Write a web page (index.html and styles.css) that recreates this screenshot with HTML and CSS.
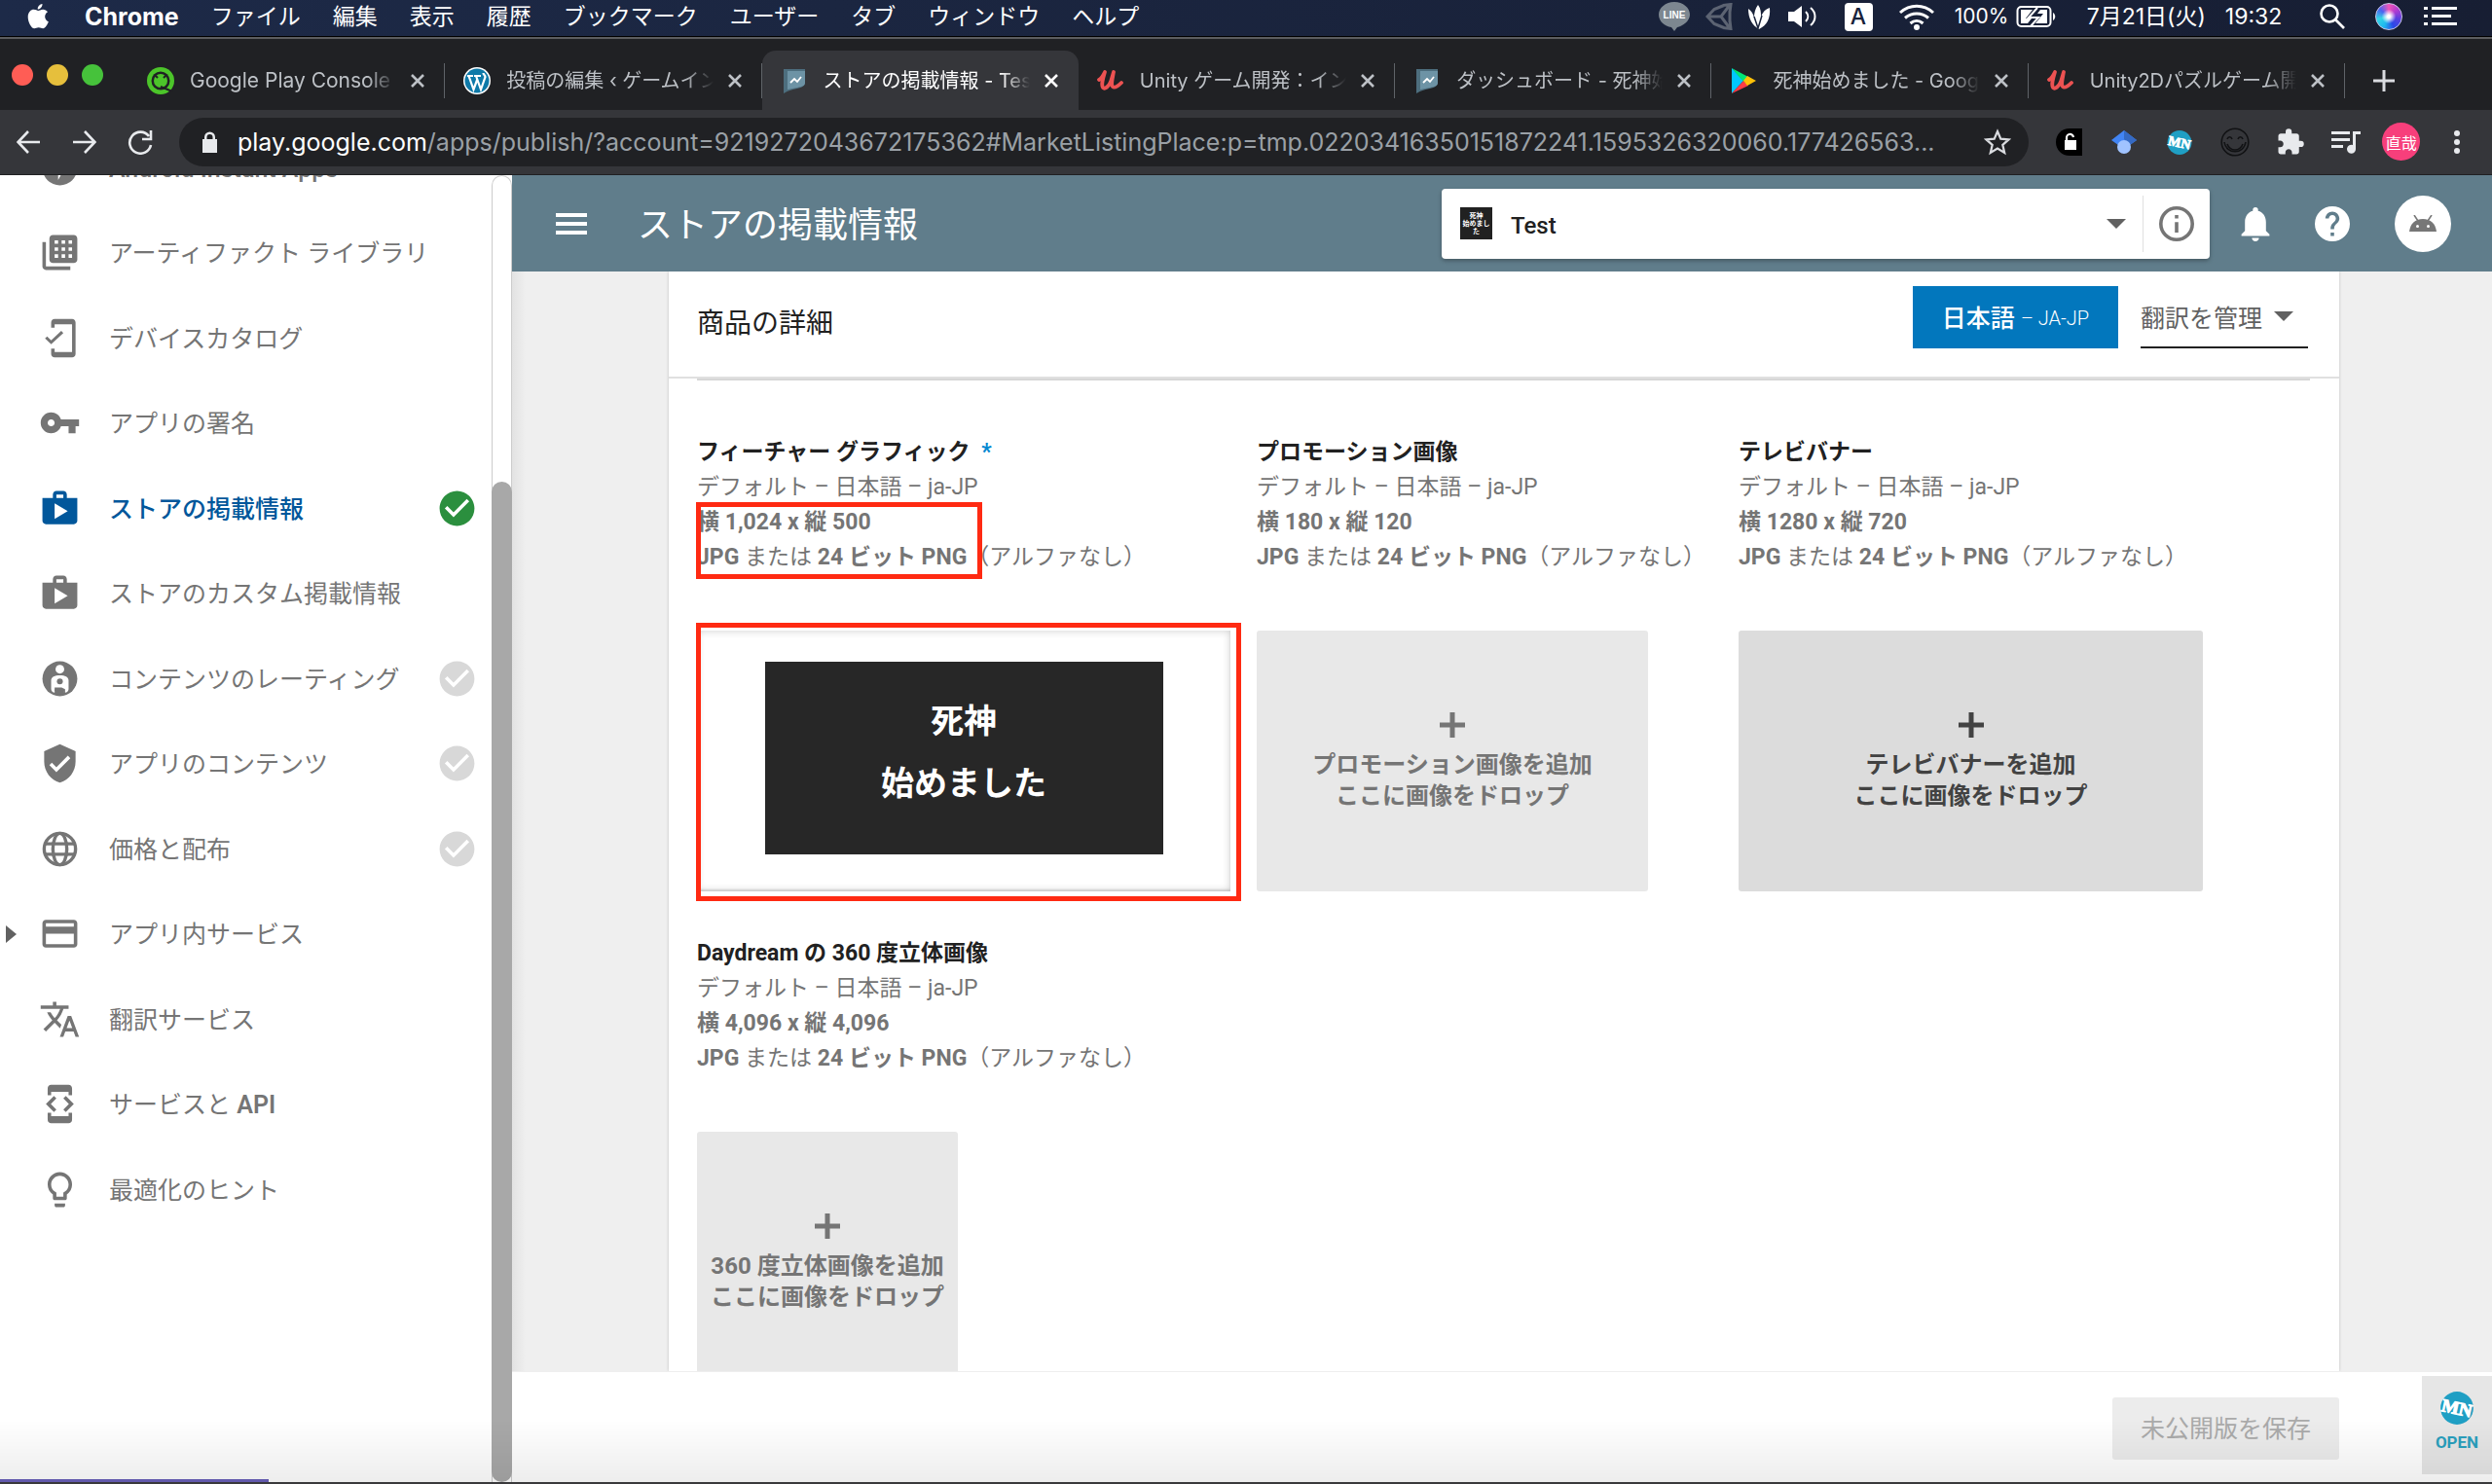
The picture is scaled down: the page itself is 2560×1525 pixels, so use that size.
FILE: index.html
```html
<!DOCTYPE html>
<html lang="ja">
<head>
<meta charset="utf-8">
<title>ストアの掲載情報 - Test</title>
<link rel="stylesheet" href="styles.css">
</head>
<body>
<svg class="defs" aria-hidden="true">
  <symbol id="case" viewBox="0 0 24 24"><path d="M16 6V4c0-1.100-.9-2-2-2h-4c-1.100 0-2 .9-2 2v2H2v13c0 1.100.9 2 2 2h16c1.100 0 2-.9 2-2V6h-6zM10 4h4v2h-4V4zM9 18V9l7.500 4.500L9 18z"/></symbol>
  <symbol id="check" viewBox="0 0 24 24"><path d="M12 2C6.480 2 2 6.480 2 12s4.480 10 10 10 10-4.480 10-10S17.520 2 12 2zm-2 15l-5-5 1.410-1.410L10 14.170l7.590-7.590L19 8l-9 9z"/></symbol>
  <symbol id="close" viewBox="0 0 16 16"><path d="M2 2l12 12M14 2L2 14" fill="none" stroke="currentColor" stroke-width="2.600"/></symbol>
  <symbol id="plus" viewBox="0 0 26 26"><path d="M10.500 0h5v10.500H26v5H15.500V26h-5V15.500H0v-5h10.500z"/></symbol>
  <symbol id="play-flag" viewBox="0 0 28 28"><path d="M3 2h22v14c0 3-3 5-8 6-5 1-9 2-14 5z" fill="#4d6e7e"/><path d="M7 4h18v12c0 3-3 4-8 5l-10 2z" fill="#6d93a5"/><path d="M10 16l4-4 3 3 4-5" fill="none" stroke="#fff" stroke-width="1.800"/></symbol>
  <symbol id="udemy" viewBox="0 0 28 28"><path d="M2 13c2-1 4-4 6-8-2 7-4 13-2 16 2 2 6-1 8-6l3-10c-1 6-3 13-1 15 2 2 6-1 9-4" fill="none" stroke="#ec5252" stroke-width="3.800" stroke-linecap="round" stroke-linejoin="round"/></symbol>
  <symbol id="mn" viewBox="0 0 36 32"><circle cx="18" cy="16" r="16" fill="#1f9fc4"/><text x="18" y="22" text-anchor="middle" transform="rotate(12 18 16)" class="mn-text">MN</text></symbol>
</svg>

<header class="menubar">
  <svg class="apple" viewBox="0 0 24 28" fill="#fff"><path d="M16.500 1c.2 2.800-2.200 5.600-4.700 5.500C11.400 3.900 13.900 1.200 16.500 1zM12.300 8c1.200 0 2.700-1.400 5-1.300 1.700.1 3.600.8 4.700 2.600-4.200 2.600-3.400 8.300.8 10-1 2.900-3.300 7-5.600 7-1.600 0-2.500-1-4.500-1s-2.900 1-4.400 1C5.300 26.400 1.500 19.500 1.700 14c.2-4.600 3.100-7.200 6-7.200 1.900 0 3.400 1.200 4.600 1.200z"/></svg>
  <nav class="menus">
    <b>Chrome</b><span>ファイル</span><span>編集</span><span>表示</span><span>履歴</span><span>ブックマーク</span><span>ユーザー</span><span>タブ</span><span>ウィンドウ</span><span>ヘルプ</span>
  </nav>
  <div class="status">
    <span class="s-line"><svg width="32" height="30" viewBox="0 0 32 30"><path d="M16 0c9 0 16 6 16 13S24 25 19 26l-3 4-3-4C6 25 0 20 0 13S7 0 16 0z" fill="#7d8790"/><text x="16" y="17" text-anchor="middle" class="line-text">LINE</text></svg></span>
    <span class="s-unity"><svg width="28" height="28" viewBox="0 0 28 28" fill="none" stroke="#5c6372" stroke-width="3"><path d="M18 2.500l8-1-1 8M25 18l1 8.500-8-1M19 2.500L9 6.500 2 14l7 7.500 10 4M2 14h14M16 14l9-12M16 14l9 12M25 8v12"/></svg></span>
    <span class="s-leaf"><svg width="24" height="26" viewBox="0 0 24 26" fill="#fff"><path d="M12 26C5 22 1 15 1 5c3 2 5 5 6 9 0-5 1-9 4-13 3 4 3 8 3 12 2-5 5-8 9-9 1 11-3 18-11 22z"/><path d="M7 13l4 12 4-13" fill="none" stroke="#18223b" stroke-width="1.500"/></svg></span>
    <span class="s-volume"><svg width="32" height="26" viewBox="0 0 32 26" fill="#fff"><path d="M1 8h6l8-6v22l-8-6H1z"/><path d="M19 8c3 3 3 7 0 10M24 4c6 5 6 13 0 18" fill="none" stroke="#fff" stroke-width="2"/></svg></span>
    <span class="s-input"><b>A</b></span>
    <span class="s-wifi"><svg width="38" height="28" viewBox="0 0 38 28" fill="none" stroke="#fff" stroke-width="3"><path d="M2 10c10-9 24-9 34 0M7 15.500c7-6 17-6 24 0M12.500 21c4-3.500 9-3.500 13 0"/><circle cx="19" cy="25" r="1.500" fill="#fff"/></svg></span>
    <span class="s-power">100%<svg width="41" height="24" viewBox="0 0 41 24"><rect x="1.500" y="2" width="34" height="20" rx="4" fill="none" stroke="#fff" stroke-width="2"/><path d="M5 5h12l-7 9h6l-4 5H5zM32 19H20l8-10h-6l3-4h7z" fill="#fff"/><path d="M22 3L13 13h10l-8 9" fill="none" stroke="#fff" stroke-width="2"/><path d="M38 8c3 2 3 6 0 8z" fill="#fff"/></svg></span>
    <span class="s-clock">7月21日(火)<span>19:32</span></span>
    <span class="s-search"><svg width="28" height="28" viewBox="0 0 28 28" fill="none" stroke="#fff" stroke-width="2.600"><circle cx="11" cy="11" r="8.500"/><path d="M17 17l9 9"/></svg></span>
    <span class="s-siri"><i></i></span>
    <span class="s-list"><svg width="34" height="20" viewBox="0 0 34 20" fill="#fff"><path d="M0 0h4v3H0zM8 0h26v3H8zM0 8h4v3H0zM8 8h20v3H8zM0 16h4v3H0zM8 16h26v3H8z"/></svg></span>
  </div>
</header>

<div class="tabstrip">
  <div class="lights"><i class="red"></i><i class="yellow"></i><i class="green"></i></div>
  <div class="tabs">
    <div class="tab"><svg class="fav" viewBox="0 0 28 28"><circle cx="14" cy="14" r="14" fill="#4cc52a"/><circle cx="14" cy="14" r="9.500" fill="#202124"/><circle cx="14" cy="14" r="7" fill="#4cc52a"/><path d="M8 8l3 3M20 8l-3 3M14 20l12 5" stroke="#202124" stroke-width="2"/></svg><span class="tab-title latin">Google Play Console</span><button aria-label="閉じる"><svg><use href="#close"/></svg></button></div>
    <div class="tab"><svg class="fav" viewBox="0 0 28 28"><circle cx="14" cy="14" r="14" fill="#fff"/><circle cx="14" cy="14" r="12.500" fill="#0e79a8"/><path d="M4 9h6M11 9h7M5.500 9l5 14 4-11M13 9l5 14 4.500-13c0-2-2-2-2-4" fill="none" stroke="#fff" stroke-width="2.200"/></svg><span class="tab-title">投稿の編集 ‹ ゲームイン</span><button aria-label="閉じる"><svg><use href="#close"/></svg></button></div>
    <div class="tab active"><svg class="fav"><use href="#play-flag"/></svg><span class="tab-title">ストアの掲載情報 - Tes</span><button aria-label="閉じる"><svg><use href="#close"/></svg></button></div>
    <div class="tab"><svg class="fav"><use href="#udemy"/></svg><span class="tab-title">Unity ゲーム開発：イン</span><button aria-label="閉じる"><svg><use href="#close"/></svg></button></div>
    <div class="tab"><svg class="fav"><use href="#play-flag"/></svg><span class="tab-title">ダッシュボード - 死神始</span><button aria-label="閉じる"><svg><use href="#close"/></svg></button></div>
    <div class="tab"><svg class="fav" viewBox="0 0 28 28"><path d="M2 1l12 13L2 27z" fill="#00c8ff"/><path d="M2 1l17 9-5 5z" fill="#00e676"/><path d="M2 27l17-8-5-5z" fill="#ff3d47"/><path d="M18 9l9 5-9 5-4-5z" fill="#ffc107"/></svg><span class="tab-title">死神始めました - Goog</span><button aria-label="閉じる"><svg><use href="#close"/></svg></button></div>
    <div class="tab"><svg class="fav"><use href="#udemy"/></svg><span class="tab-title">Unity2Dパズルゲーム開</span><button aria-label="閉じる"><svg><use href="#close"/></svg></button></div>
  </div>
  <button class="new-tab" aria-label="新しいタブ"><svg width="22" height="22" viewBox="0 0 22 22" stroke="#dadce0" stroke-width="3"><path d="M11 0v22M0 11h22"/></svg></button>
</div>

<div class="toolbar">
  <div class="nav-buttons">
    <button aria-label="戻る"><svg width="24" height="24" viewBox="0 0 24 24"><path d="M12 1L1.500 12 12 23M2 12h22"/></svg></button>
    <button aria-label="進む"><svg width="24" height="24" viewBox="0 0 24 24"><path d="M12 1l10.500 11L12 23M22 12H0"/></svg></button>
    <button aria-label="再読み込み"><svg width="26" height="26" viewBox="0 0 26 26"><path d="M22 7a11 11 0 1 0 2 9M24 1v9h-9"/></svg></button>
  </div>
  <div class="omnibox">
    <svg width="17" height="22" viewBox="0 0 17 22" fill="#e8eaed"><path d="M1 8h2V6a5.500 5.500 0 0 1 11 0v2h2v14H1zM5.500 8h6V6a3 3 0 0 0-6 0z"/></svg>
    <span class="url"><em>play.google.com</em>/apps/publish/?account=9219272043672175362#MarketListingPlace:p=tmp.02203416350151872241.1595326320060.177426563...</span>
    <button aria-label="ブックマーク"><svg width="28" height="28" viewBox="0 0 28 28" fill="none" stroke="#dadce0" stroke-width="2.200"><path d="M14 3l3.300 7.600 8.200.8-6.200 5.400 1.900 8.100L14 20.600l-7.200 4.300 1.900-8.100-6.200-5.400 8.200-.8z"/></svg></button>
  </div>
  <div class="extensions">
    <button aria-label="ロック"><svg width="27" height="28" viewBox="0 0 27 28"><path d="M14 0h13v28H14C6 28 0 22 0 14S6 0 14 0z"/><path d="M9 12h12v10H9z" fill="#fff"/><path d="M11 13V10a3.500 3.500 0 0 1 7-1" fill="none" stroke="#fff" stroke-width="2.200"/></svg></button>
    <button aria-label="Scholar"><svg width="28" height="26" viewBox="0 0 28 26"><path d="M14 1l13 10-7 5H8l-7-5z" fill="#4285f4"/><path d="M14 1l13 10-7 5-6-6z" fill="#356ac3"/><circle cx="14" cy="18" r="7" fill="#a0c3ff"/></svg></button>
    <button aria-label="MN"><svg width="28" height="25"><use href="#mn"/></svg></button>
    <button aria-label="スマイル"><svg width="30" height="30" viewBox="0 0 30 30" fill="none" stroke="#111214" stroke-width="1.600"><circle cx="15" cy="15" r="13.800"/><path d="M7 12c1-3 4-3 5 0M18 12c1-3 4-3 5 0M4 15c2 13 20 13 22 0M7 17c3 8 13 8 16 0"/></svg></button>
    <button aria-label="拡張機能"><svg width="30" height="30" viewBox="0 0 24 24" fill="#e8eaed"><path d="M20.500 11H19V7c0-1.100-.9-2-2-2h-4V3.500a2.500 2.500 0 0 0-5 0V5H4c-1.100 0-2 .9-2 2v3.800h1.500c1.500 0 2.700 1.200 2.700 2.700S5 16.200 3.500 16.200H2V20c0 1.100.9 2 2 2h3.800v-1.500c0-1.500 1.200-2.700 2.700-2.700s2.700 1.200 2.700 2.700V22H17c1.100 0 2-.9 2-2v-4h1.500a2.500 2.500 0 0 0 0-5z"/></svg></button>
    <button aria-label="再生キュー"><svg width="30" height="24" viewBox="0 0 30 24" fill="#e8eaed"><path d="M0 1h19v3H0zM0 8h19v3H0zM0 15h12v3H0zM22 1h8v3h-5v15a4.500 4.500 0 1 1-3-4z"/></svg></button>
    <button class="profile">直哉</button>
    <button aria-label="メニュー"><svg width="6" height="24" viewBox="0 0 6 24" fill="#e8eaed"><circle cx="3" cy="3" r="3"/><circle cx="3" cy="12" r="3"/><circle cx="3" cy="21" r="3"/></svg></button>
  </div>
</div>

<div class="console">
  <aside class="sidebar">
    <ul class="nav">
      <li><a href="#instant"><svg viewBox="0 0 24 24"><path d="M12 2a10 10 0 1 0 0 20 10 10 0 0 0 0-20zm-1 17v-6H8l5-9v6h3z"/></svg><b>Android Instant Apps</b></a></li>
      <li><a href="#artifact"><svg viewBox="0 0 24 24"><path d="M2 6h2v14h14v2H4c-1.100 0-2-.9-2-2zM20 2H8c-1.100 0-2 .9-2 2v12c0 1.100.9 2 2 2h12c1.100 0 2-.9 2-2V4c0-1.100-.9-2-2-2zM11 15H9v-2h2zm0-4H9V9h2zm0-4H9V5h2zm4 8h-2v-2h2zm0-4h-2V9h2zm0-4h-2V5h2zm4 8h-2v-2h2zm0-4h-2V9h2zm0-4h-2V5h2z"/></svg><span>アーティファクト ライブラリ</span></a></li>
      <li><a href="#device"><svg viewBox="0 0 24 24"><path d="M19 1H9c-1.100 0-2 .9-2 2v3h2V4h10v16H9v-2H7v3c0 1.100.9 2 2 2h10c1.100 0 2-.9 2-2V3c0-1.100-.9-2-2-2zM7 15.500l-3.500-3.300 1.200-1.200L7 13.200l5.800-5.400L14 9z"/></svg><span>デバイスカタログ</span></a></li>
      <li><a href="#sign"><svg viewBox="0 0 24 24"><path d="M12.650 10C11.830 7.670 9.610 6 7 6c-3.310 0-6 2.690-6 6s2.690 6 6 6c2.610 0 4.830-1.670 5.650-4H17v4h4v-4h2v-4H12.650zM7 14c-1.100 0-2-.9-2-2s.9-2 2-2 2 .9 2 2-.9 2-2 2z"/></svg><span>アプリの署名</span></a></li>
      <li><a href="#store" class="current"><svg><use href="#case"/></svg><span>ストアの掲載情報</span><svg class="done"><use href="#check"/></svg></a></li>
      <li><a href="#custom"><svg><use href="#case"/></svg><span>ストアのカスタム掲載情報</span></a></li>
      <li><a href="#rating"><svg viewBox="0 0 24 24"><circle cx="12" cy="12" r="10"/><g fill="#fff"><circle cx="12" cy="6.500" r="2.500"/><path d="M12 10c3 0 5 1 5 3v5c0 1-1 2-2 2h-1v-1l-2-1h-3v2c-1 0-2-1-2-2v-5c0-2 2-3 5-3z"/></g><circle cx="12" cy="13.500" r="1.700"/><path d="M9 17h4l2 1v3h-1v-2h-5z"/></svg><span>コンテンツのレーティング</span><svg class="todo"><use href="#check"/></svg></a></li>
      <li><a href="#content"><svg viewBox="0 0 24 24"><path d="M12 1L3 5v6c0 5.550 3.840 10.740 9 12 5.160-1.260 9-6.450 9-12V5l-9-4zm-2 16l-4-4 1.410-1.410L10 14.170l6.590-6.590L18 9l-8 8z"/></svg><span>アプリのコンテンツ</span><svg class="todo"><use href="#check"/></svg></a></li>
      <li><a href="#price"><svg viewBox="0 0 24 24"><g fill="none" stroke="currentColor" stroke-width="1.900"><circle cx="12" cy="12" r="9"/><ellipse cx="12" cy="12" rx="4" ry="9"/><path d="M3.500 9h17M3.500 15h17"/></g></svg><span>価格と配布</span><svg class="todo"><use href="#check"/></svg></a></li>
      <li><a href="#inapp" class="expandable"><svg viewBox="0 0 24 24"><path d="M20 4H4c-1.110 0-2 .9-2 2v12c0 1.110.89 2 2 2h16c1.110 0 2-.89 2-2V6c0-1.110-.89-2-2-2zm0 14H4v-6h16v6zm0-10H4V6h16v2z"/></svg><span>アプリ内サービス</span></a></li>
      <li><a href="#translate"><svg viewBox="0 0 24 24"><path d="M12.870 15.070l-2.540-2.510.03-.03c1.740-1.940 2.980-4.170 3.710-6.530H17V4h-7V2H8v2H1v1.990h11.170C11.500 7.920 10.440 9.750 9 11.350 8.070 10.320 7.300 9.190 6.690 8h-2c.73 1.630 1.730 3.170 2.980 4.560l-5.090 5.020L4 19l5-5 3.110 3.110.76-2.040zM18.500 10h-2L12 22h2l1.120-3h4.750L21 22h2l-4.500-12zm-2.620 7l1.620-4.330L19.120 17h-3.240z"/></svg><span>翻訳サービス</span></a></li>
      <li><a href="#api"><svg viewBox="0 0 24 24"><path d="M7 5h10v2h2V3c0-1.100-.9-1.990-2-1.990L7 1c-1.100 0-2 .9-2 2v4h2V5zm8.410 11.590L20 12l-4.590-4.590L14 8.830 17.170 12 14 15.170l1.410 1.420zM10 15.170L6.830 12 10 8.830 8.590 7.410 4 12l4.590 4.590L10 15.170zM17 19H7v-2H5v4c0 1.100.9 2 2 2h10c1.100 0 2-.9 2-2v-4h-2v2z"/></svg><span>サービスと <b>API</b></span></a></li>
      <li><a href="#tips"><svg viewBox="0 0 24 24"><path d="M9 21c0 .55.45 1 1 1h4c.55 0 1-.45 1-1v-1H9v1zm3-19C8.140 2 5 5.140 5 9c0 2.380 1.190 4.470 3 5.740V17c0 .55.45 1 1 1h6c.55 0 1-.45 1-1v-2.260c1.810-1.270 3-3.360 3-5.740 0-3.860-3.140-7-7-7zm2.850 11.100l-.85.6V16h-4v-2.300l-.85-.6C7.800 12.160 7 10.630 7 9c0-2.760 2.240-5 5-5s5 2.240 5 5c0 1.630-.8 3.160-2.150 4.100z"/></svg><span>最適化のヒント</span></a></li>
    </ul>
    <div class="scrollbar"><div class="thumb"></div></div>
  </aside>

  <main class="main">
    <header class="appbar">
      <button class="burger" aria-label="メニュー"><svg width="32" height="22" viewBox="0 0 32 22" fill="#fff"><path d="M0 0h32v4H0zM0 9h32v4H0zM0 18h32v4H0z"/></svg></button>
      <h1>ストアの掲載情報</h1>
      <div class="picker">
        <span class="thumbnail"><span>死神</span><span>始めまし</span><span>た</span></span>
        <select aria-label="アプリ"><option>Test</option></select>
        <i class="caret"></i>
        <button class="info" aria-label="情報"><svg width="36" height="36" viewBox="2 2 20 20" fill="#757575"><path d="M11 7h2v2h-2zm0 4h2v6h-2zm1-9a10 10 0 1 0 0 20 10 10 0 0 0 0-20zm0 18a8 8 0 1 1 0-16 8 8 0 0 1 0 16z"/></svg></button>
      </div>
      <div class="actions">
        <button aria-label="通知"><svg width="30" height="36" viewBox="4 2 16 20" fill="#fff"><path d="M12 22c1.100 0 2-.9 2-2h-4c0 1.100.9 2 2 2zm6-6v-5c0-3.070-1.640-5.640-4.500-6.320V4a1.500 1.500 0 0 0-3 0v.680C7.630 5.360 6 7.920 6 11v5l-2 2v1h16v-1l-2-2z"/></svg></button>
        <button aria-label="ヘルプ"><svg width="36" height="36" viewBox="2 2 20 20" fill="#fff"><path d="M12 2a10 10 0 1 0 0 20 10 10 0 0 0 0-20zm1 17h-2v-2h2v2zm2.070-7.750l-.9.920C13.450 12.900 13 13.500 13 15h-2v-.5c0-1.100.45-2.100 1.170-2.830l1.240-1.260c.37-.36.590-.86.590-1.410 0-1.100-.9-2-2-2s-2 .9-2 2H8c0-2.210 1.790-4 4-4s4 1.790 4 4c0 .88-.36 1.680-.93 2.250z"/></svg></button>
        <button class="avatar" aria-label="アカウント"><svg width="28" height="17" viewBox="0 0 28 17"><path d="M0 17C1 9 6 4 14 4s13 5 14 13z" fill="#777"/><path d="M5 0l4 6M23 0l-4 6" stroke="#777" stroke-width="1.600"/><circle cx="8.500" cy="11.500" r="1.500" fill="#fff"/><circle cx="19.500" cy="11.500" r="1.500" fill="#fff"/></svg></button>
      </div>
    </header>

    <section class="card">
      <div class="card-head">
        <h2>商品の詳細</h2>
        <button class="lang">日本語 <small>– JA-JP</small></button>
        <button class="manage">翻訳を管理<i class="caret"></i></button>
      </div>
      <div class="assets">
        <article class="asset feature">
          <h3>フィーチャー グラフィック <em>*</em></h3>
          <p>デフォルト – 日本語 – ja-JP</p>
          <div class="spec marked">
            <p><b>横 1,024 x 縦 500</b></p>
            <p><b>JPG</b> または <b>24 ビット PNG</b>（アルファなし）</p>
          </div>
          <div class="preview"><div class="picture"><span>死神</span><span>始めました</span></div></div>
        </article>
        <article class="asset promo">
          <h3>プロモーション画像</h3>
          <p>デフォルト – 日本語 – ja-JP</p>
          <div class="spec">
            <p><b>横 180 x 縦 120</b></p>
            <p><b>JPG</b> または <b>24 ビット PNG</b>（アルファなし）</p>
          </div>
          <button class="drop"><svg><use href="#plus"/></svg><span>プロモーション画像を追加</span><span>ここに画像をドロップ</span></button>
        </article>
        <article class="asset tv">
          <h3>テレビバナー</h3>
          <p>デフォルト – 日本語 – ja-JP</p>
          <div class="spec">
            <p><b>横 1280 x 縦 720</b></p>
            <p><b>JPG</b> または <b>24 ビット PNG</b>（アルファなし）</p>
          </div>
          <button class="drop hover"><svg><use href="#plus"/></svg><span>テレビバナーを追加</span><span>ここに画像をドロップ</span></button>
        </article>
        <article class="asset daydream">
          <h3>Daydream の 360 度立体画像</h3>
          <p>デフォルト – 日本語 – ja-JP</p>
          <div class="spec">
            <p><b>横 4,096 x 縦 4,096</b></p>
            <p><b>JPG</b> または <b>24 ビット PNG</b>（アルファなし）</p>
          </div>
          <button class="drop"><svg><use href="#plus"/></svg><span>360 度立体画像を追加</span><span>ここに画像をドロップ</span></button>
        </article>
      </div>
    </section>

    <footer class="savebar">
      <button class="save" disabled>未公開版を保存</button>
      <button class="open-widget"><svg width="38" height="34"><use href="#mn"/></svg>OPEN</button>
    </footer>
  </main>
</div>
<div class="dock-shade"></div>
</body>
</html>
```
FILE: styles.css
```css
*, *::before, *::after { box-sizing: border-box; }
body {
  margin: 0;
  height: 100vh;
  display: flex;
  flex-direction: column;
  overflow: hidden;
  background: #fff;
  font-family: Roboto, "Noto Sans CJK JP", sans-serif;
  color: #212121;
}
button {
  border: 0;
  padding: 0;
  background: none;
  font: inherit;
  color: inherit;
  display: flex;
  align-items: center;
  justify-content: center;
}
h1, h2, h3, p, ul { margin: 0; padding: 0; font-weight: 400; }
.defs { position: absolute; width: 0; height: 0; }
.mn-text { font: 700 18px "Liberation Serif", serif; fill: #fff; stroke: #fff; stroke-width: 1px; }

/* macOS menu bar */
.menubar {
  flex: none;
  height: 38px;
  display: flex;
  align-items: center;
  padding: 0 26px 3px;
  background: linear-gradient(90deg, #1d2a48, #171e33);
  border-bottom: 1px solid #000;
  color: #fff;
  font: 23px/34px Inter, "Noto Sans CJK JP", sans-serif;
  white-space: nowrap;
}
.apple { width: 26px; height: 28px; }
.menus { display: flex; gap: 33px; margin-left: 35px; }
.menus b { font-size: 25px; }
.status { display: flex; margin-left: auto; }
.status > span { display: flex; align-items: center; justify-content: center; height: 34px; }
.s-line { width: 52px; }
.line-text { font: 700 10px "Liberation Sans", sans-serif; fill: #fff; }
.s-unity { width: 40px; }
.s-leaf { width: 42px; }
.s-volume { width: 48px; }
.s-input { width: 66px; }
.s-input b { width: 29px; line-height: 29px; border-radius: 4px; background: #fff; color: #18223b; text-align: center; font-size: 23px; font-weight: 500; }
.s-wifi { width: 54px; }
.s-power { width: 128px; gap: 8px; font-size: 21px; }
.s-clock { width: 240px; gap: 20px; font-size: 23px; }
.s-search { width: 64px; }
.s-siri { width: 52px; }
.s-siri i {
  width: 28px; height: 28px; border-radius: 50%; border: 1px solid #c9c4e6;
  background: radial-gradient(circle, #fff 8%, transparent 40%), conic-gradient(#f055b8, #b03bd0, #5a3fe0, #2a49e8, #1fb8f0, #33d6e6, #4a63f0, #f055b8);
}
.s-list { width: 54px; }

/* browser tab strip */
.tabstrip {
  flex: none;
  height: 75px;
  display: flex;
  align-items: flex-end;
  background: #202124;
  border-top: 2px solid #5c5d5f;
  color: #bdc1c6;
  font: 20px/30px Inter, "Noto Sans CJK JP", sans-serif;
}
.lights { width: 132px; height: 73px; padding-left: 12px; display: flex; gap: 14px; align-items: center; }
.lights i { width: 22px; height: 22px; border-radius: 50%; }
.lights .red { background: #ff5d55; }
.lights .yellow { background: #e6bf3c; }
.lights .green { background: #46c23b; }
.tabs { flex: 1; display: flex; min-width: 0; }
.tab {
  flex: 1 1 0;
  min-width: 0;
  height: 61px;
  display: flex;
  align-items: center;
  padding: 0 20px 0 19px;
  background: linear-gradient(#5f6368, #5f6368) right / 1px 36px no-repeat;
}
.tab.active { background: #35363a; border-radius: 14px 14px 0 0; color: #fff; }
.fav { width: 28px; height: 28px; flex: none; }
.tab-title {
  flex: 1;
  min-width: 0;
  margin: 0 14px 0 16px;
  overflow: hidden;
  white-space: nowrap;
  mask-image: linear-gradient(90deg, #000 86%, transparent);
}
.latin { font-size: 21px; }
.tab button svg { width: 16px; height: 16px; }
.new-tab { width: 151px; height: 61px; padding-right: 72px; }

/* browser toolbar */
.toolbar {
  flex: none;
  height: 67px;
  display: flex;
  align-items: center;
  background: #35363a;
  border-bottom: 1px solid #1f2022;
}
.nav-buttons { width: 184px; padding-right: 11px; display: flex; }
.nav-buttons button { flex: 1; }
.nav-buttons svg { fill: none; stroke: #e8eaed; stroke-width: 2.6px; }
.omnibox {
  flex: 1;
  min-width: 0;
  height: 50px;
  display: flex;
  align-items: center;
  padding: 0 18px 0 23px;
  border-radius: 25px;
  background: #202124;
}
.url {
  flex: 1;
  min-width: 0;
  margin-left: 20px;
  overflow: hidden;
  white-space: nowrap;
  color: #9aa0a6;
  font: 25px/36px Inter, sans-serif;
}
.url em { font-style: normal; color: #fff; }
.extensions { width: 476px; padding: 0 8px 0 13px; display: flex; }
.extensions button { flex: 1; height: 50px; }
.extensions .profile { flex: none; width: 39px; height: 39px; margin: 5px 9px; border-radius: 50%; background: #f73f7b; color: #fff; font-size: 16px; }

/* console layout */
.console { flex: 1; min-height: 0; display: flex; background: #efefef; border-bottom: 2px solid #39393b; }
.sidebar {
  flex: none;
  width: 526px;
  display: flex;
  overflow: hidden;
  background: #fff;
}
.nav { flex: 1; margin-top: -51px; list-style: none; }
.nav li:nth-child(even) { padding-bottom: 1px; }
.nav a {
  height: 87px;
  display: flex;
  align-items: center;
  padding: 0 14px 0 40px;
  color: #757575;
  text-decoration: none;
  font-size: 25px;
}
.nav svg { width: 43px; height: 43px; flex: none; fill: currentColor; }
.nav a > span, .nav a > b { flex: 1; margin-left: 29px; white-space: nowrap; }
.nav a > span { padding-bottom: 4px; }
.nav a > b { padding-top: 2px; }
.nav b { font-weight: 500; }
.nav span b { font-weight: 600; }
.nav .current { color: #01579b; font-weight: 500; }
.nav .done { color: #2b8f3e; }
.nav .todo { color: #d8d8d8; }
.nav .expandable::before {
  content: "";
  margin: 0 23px 0 -34px;
  border: 9px solid transparent;
  border-left: 11px solid #616161;
  border-right: 0;
}
.scrollbar {
  width: 21px;
  display: flex;
  align-items: flex-end;
  border-radius: 11px 11px 0 0;
  border: 1px solid #ccc;
  border-bottom: 0;
}
.thumb { height: 1028px; flex: 1; margin: 0 -1px; border-radius: 11px; background: #a8a8a8; }
.main { flex: 1; min-width: 0; display: flex; flex-direction: column; background: linear-gradient(90deg, #e2e2e2, #efefef 14px); }

.appbar {
  flex: none;
  height: 99px;
  display: flex;
  align-items: center;
  padding: 0 42px 0 45px;
  background: #607d8b;
  color: #fff;
}
.appbar h1 { margin-left: 52px; padding-top: 4px; font-size: 36px; line-height: 54px; }
.picker {
  width: 789px;
  height: 72px;
  margin-left: auto;
  display: flex;
  align-items: center;
  padding: 0 16px 0 19px;
  border-radius: 4px;
  background: #fff;
  box-shadow: 0 2px 4px rgba(0, 0, 0, .3);
}
.thumbnail { width: 33px; height: 33px; display: flex; flex-direction: column; align-items: center; justify-content: center; background: #212121; font-size: 7px; line-height: 8px; font-weight: 700; white-space: nowrap; }
.picker select { flex: 1; margin-left: 15px; padding: 4px 4px 0; border: 0; background: none; appearance: none; color: #212121; font: 500 24px/36px Roboto, sans-serif; }
.caret { border: 10px solid transparent; border-top-color: #616161; border-bottom: 0; }
.info { height: 58px; margin-left: 17px; padding-left: 16px; border-left: 1px solid #e0e0e0; }
.actions { display: flex; align-items: center; margin-left: 32px; gap: 46px; }
.avatar { width: 58px; height: 58px; border-radius: 50%; background: #fff; }

.card {
  flex: 1;
  min-height: 0;
  overflow: hidden;
  margin: 0 157px 0 161px;
  background: #fff;
  box-shadow: 0 0 3px rgba(0, 0, 0, .2);
  clip-path: inset(0 -4px 0 -4px);
}
.card-head { height: 110px; display: flex; align-items: flex-start; padding: 15px 32px 0 29px; border-bottom: 2px solid #e0e0e0; }
.card-head h2 { flex: 1; font-size: 28px; line-height: 78px; }
.lang { width: 211px; height: 64px; padding-bottom: 2px; background: #0277bd; color: #fff; font-size: 25px; font-weight: 500; gap: 6px; }
.lang small { padding-top: 3px; font-size: 20px; font-weight: 300; }
.manage { width: 172px; height: 64px; margin-left: 23px; gap: 12px; justify-content: flex-start; border-bottom: 2px solid #212121; color: #616161; font-size: 25px; white-space: nowrap; }

.assets {
  margin: 0 30px 0 29px;
  padding-top: 56px;
  border-top: 2px solid #d6d6d6;
  display: grid;
  grid-template-columns: 575px 495px 1fr;
  row-gap: 46px;
}
.asset { font-size: 23px; line-height: 36px; white-space: nowrap; color: #757575; }
.asset h3 { font-size: 23px; font-weight: 700; color: #212121; }
.asset h3 em { margin-left: 6px; font-style: normal; color: #0288d1; }
.asset b { font-weight: 700; }
.marked { position: relative; }
.marked::after { content: ""; position: absolute; left: -1px; top: -3px; width: 294px; height: 79px; border: 5px solid #ff2a12; }
.preview {
  position: relative;
  width: 548px;
  height: 268px;
  margin-top: 57px;
  padding-bottom: 6px;
  display: flex;
  align-items: center;
  justify-content: center;
  box-shadow: inset 0 0 8px rgba(0, 0, 0, .2), inset 0 -2px 2px rgba(0, 0, 0, .12);
}
.preview::after { content: ""; position: absolute; left: -1px; top: -8px; right: -11px; bottom: -10px; border: 5px solid #ff2a12; }
.picture {
  width: 409px;
  height: 198px;
  padding-bottom: 12px;
  display: flex;
  flex-direction: column;
  align-items: center;
  justify-content: center;
  background: #272727;
  color: #fff;
  font-size: 34px;
  line-height: 64px;
  font-weight: 700;
}
.drop {
  height: 268px;
  margin-top: 57px;
  padding-top: 2px;
  flex-direction: column;
  border-radius: 3px;
  background: #e8e8e8;
  color: #757575;
  font-size: 24px;
  line-height: 32px;
  font-weight: 700;
}
.drop svg { width: 26px; height: 26px; margin-bottom: 12px; fill: currentColor; }
.drop.hover { background: #dcdcdc; color: #424242; }
.promo .drop { width: 402px; }
.tv .drop { width: 477px; }
.daydream .drop { width: 268px; }

.savebar {
  flex: none;
  height: 114px;
  display: flex;
  align-items: flex-start;
  justify-content: flex-end;
  background: #fff;
  border-top: 1px solid #eee;
}
.save { width: 233px; height: 64px; margin: 26px 85px 0 0; padding-bottom: 4px; border-radius: 3px; background: #ececec; color: #aaa; font-size: 25px; }
.open-widget { width: 72px; height: 101px; margin-top: 4px; padding-bottom: 6px; flex-direction: column; gap: 6px; background: #e6e6e6; color: #2a9fbd; font: 700 17px/24px Roboto, sans-serif; }

.dock-shade {
  position: fixed;
  left: 0; right: 0; bottom: 2px;
  height: 64px;
  background: linear-gradient(#6259ad, #6259ad) left bottom / 276px 3px no-repeat, linear-gradient(rgba(0, 0, 0, 0), rgba(0, 0, 0, .07));
  pointer-events: none;
}
```
